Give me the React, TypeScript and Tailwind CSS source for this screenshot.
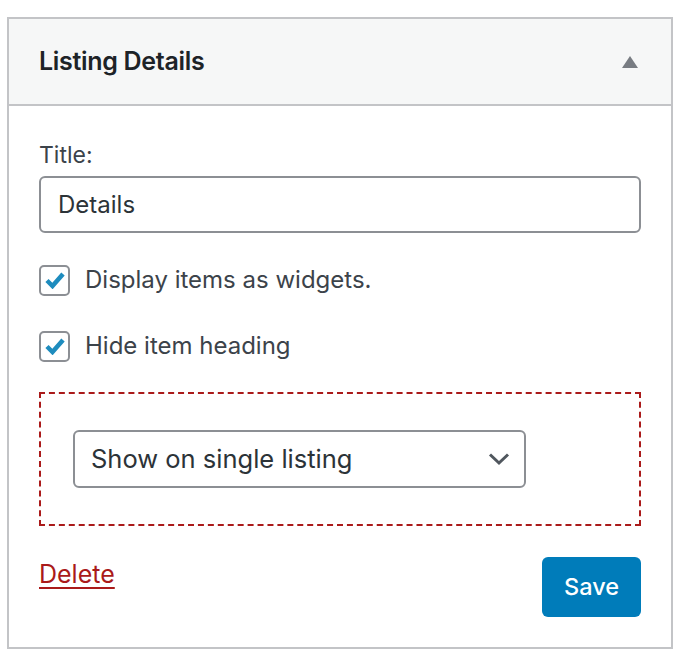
export default function App() {
  return (
    <div className="min-h-[664px] bg-white pl-[7px] pt-[17px] font-['Inter','Liberation_Sans',sans-serif]">
      <div className="w-[666px] border-2 border-[#c3c4c7] bg-white">
        <div className="flex h-[87px] items-center justify-between border-b-2 border-[#c3c4c7] bg-[#f6f7f7] pl-[30px] pr-[33px]">
          <h2 className="text-[25px] font-semibold tracking-[-0.3px] text-[#1d2327]">Listing Details</h2>
          <svg width="16" height="12" viewBox="0 0 16 12">
            <polygon points="8,0 16,12 0,12" fill="#787c82" />
          </svg>
        </div>
        <div className="px-[30px] pb-[30px] pt-[34px]">
          <label className="block text-[23px] leading-[30px] text-[#3c434a]">Title:</label>
          <div className="mt-[6px] flex h-[57px] items-center rounded-[6px] border-2 border-[#8c8f94] px-[17px] text-[24px] text-[#2c3338]">
            Details
          </div>
          <div className="mt-[32px] flex flex-col gap-[36px]">
            <Check label="Display items as widgets." />
            <Check label="Hide item heading" />
          </div>
          <div className="mt-[31px] border-2 border-dashed border-[#aa1a1a] px-[32px] py-[36px]">
            <div className="flex h-[58px] w-[453px] items-center justify-between rounded-[6px] border-2 border-[#8c8f94] pl-[16px] pr-[14px] text-[25.5px] text-[#2c3338]">
              <span>Show on single listing</span>
              <svg width="22" height="14" viewBox="0 0 22 14" fill="none">
                <path d="M2 2.5 L11 11 L20 2.5" stroke="#50575e" strokeWidth="3" />
              </svg>
            </div>
          </div>
          <div className="mt-[31px] flex items-start justify-between">
            <a className="mt-[2px] text-[25px] leading-[30px] text-[#aa1a1a] underline decoration-2 underline-offset-[4px]" href="#">
              Delete
            </a>
            <button className="h-[60px] w-[99px] rounded-[6px] bg-[#007cba] text-[23.5px] font-medium text-white">
              Save
            </button>
          </div>
        </div>
      </div>
    </div>
  );
}

function Check({ label }: { label: string }) {
  return (
    <div className="flex h-[30px] items-center gap-[15px]">
      <span className="flex h-[31px] w-[31px] items-center justify-center rounded-[5px] border-2 border-[#8c8f94] bg-white">
        <svg width="22" height="18" viewBox="0 0 22 18" fill="none">
          <path d="M3 9.5 L8.5 15 L19 3" stroke="#1e8cbe" strokeWidth="4.5" />
        </svg>
      </span>
      <span className="text-[24px] text-[#3c434a]">{label}</span>
    </div>
  );
}
